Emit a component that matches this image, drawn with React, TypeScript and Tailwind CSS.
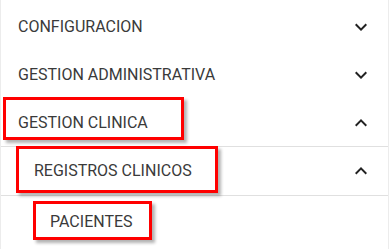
import React from 'react';

type Item = {
  label: string;
  depth: number;
  open?: boolean;
  chevron: boolean;
  box?: { left: number; top: number; width: number; height: number };
  divider?: boolean;
  h: number;
};

const ITEMS: Item[] = [
  { label: 'CONFIGURACION', depth: 0, chevron: true, open: false, h: 49 },
  { label: 'GESTION ADMINISTRATIVA', depth: 0, chevron: true, open: false, h: 48 },
  {
    label: 'GESTION CLINICA',
    depth: 0,
    chevron: true,
    open: true,
    h: 48,
    divider: true,
    box: { left: 2, top: -2, width: 181, height: 43 },
  },
  {
    label: 'REGISTROS CLINICOS',
    depth: 1,
    chevron: true,
    open: true,
    h: 49,
    divider: true,
    box: { left: 15, top: -1, width: 202, height: 47 },
  },
  {
    label: 'PACIENTES',
    depth: 2,
    chevron: false,
    h: 52,
    box: { left: 32, top: 5, width: 119, height: 39 },
  },
];

function Chevron({ open }: { open?: boolean }) {
  return (
    <svg viewBox="0 0 24 24" className={`w-6 h-6 fill-[#222] ${open ? 'rotate-180' : ''}`}>
      <path d="M16.59 8.59 12 13.17 7.41 8.59 6 10l6 6 6-6z" />
    </svg>
  );
}

export default function App() {
  return (
    <div className="w-[389px] h-[249px] overflow-hidden bg-white border-x border-[#ececec] pt-[2px] font-['Roboto',sans-serif] text-[16px] text-[#3a3a3a]">
      {ITEMS.map((item) => (
        <div
          key={item.label}
          className={`relative flex items-center justify-between pr-[15px] ${item.divider ? 'border-b border-[#e0e0e0]' : ''}`}
          style={{ height: item.h, paddingLeft: 17 + item.depth * 16 }}
        >
          <span className="leading-6">{item.label}</span>
          {item.chevron && <Chevron open={item.open} />}
          {item.box && (
            <div
              className="absolute border-[3px] border-[#ff0000] shadow-[3px_3px_3px_rgba(0,0,0,0.3)] pointer-events-none"
              style={{ left: item.box.left, top: item.box.top, width: item.box.width, height: item.box.height }}
            />
          )}
        </div>
      ))}
    </div>
  );
}
